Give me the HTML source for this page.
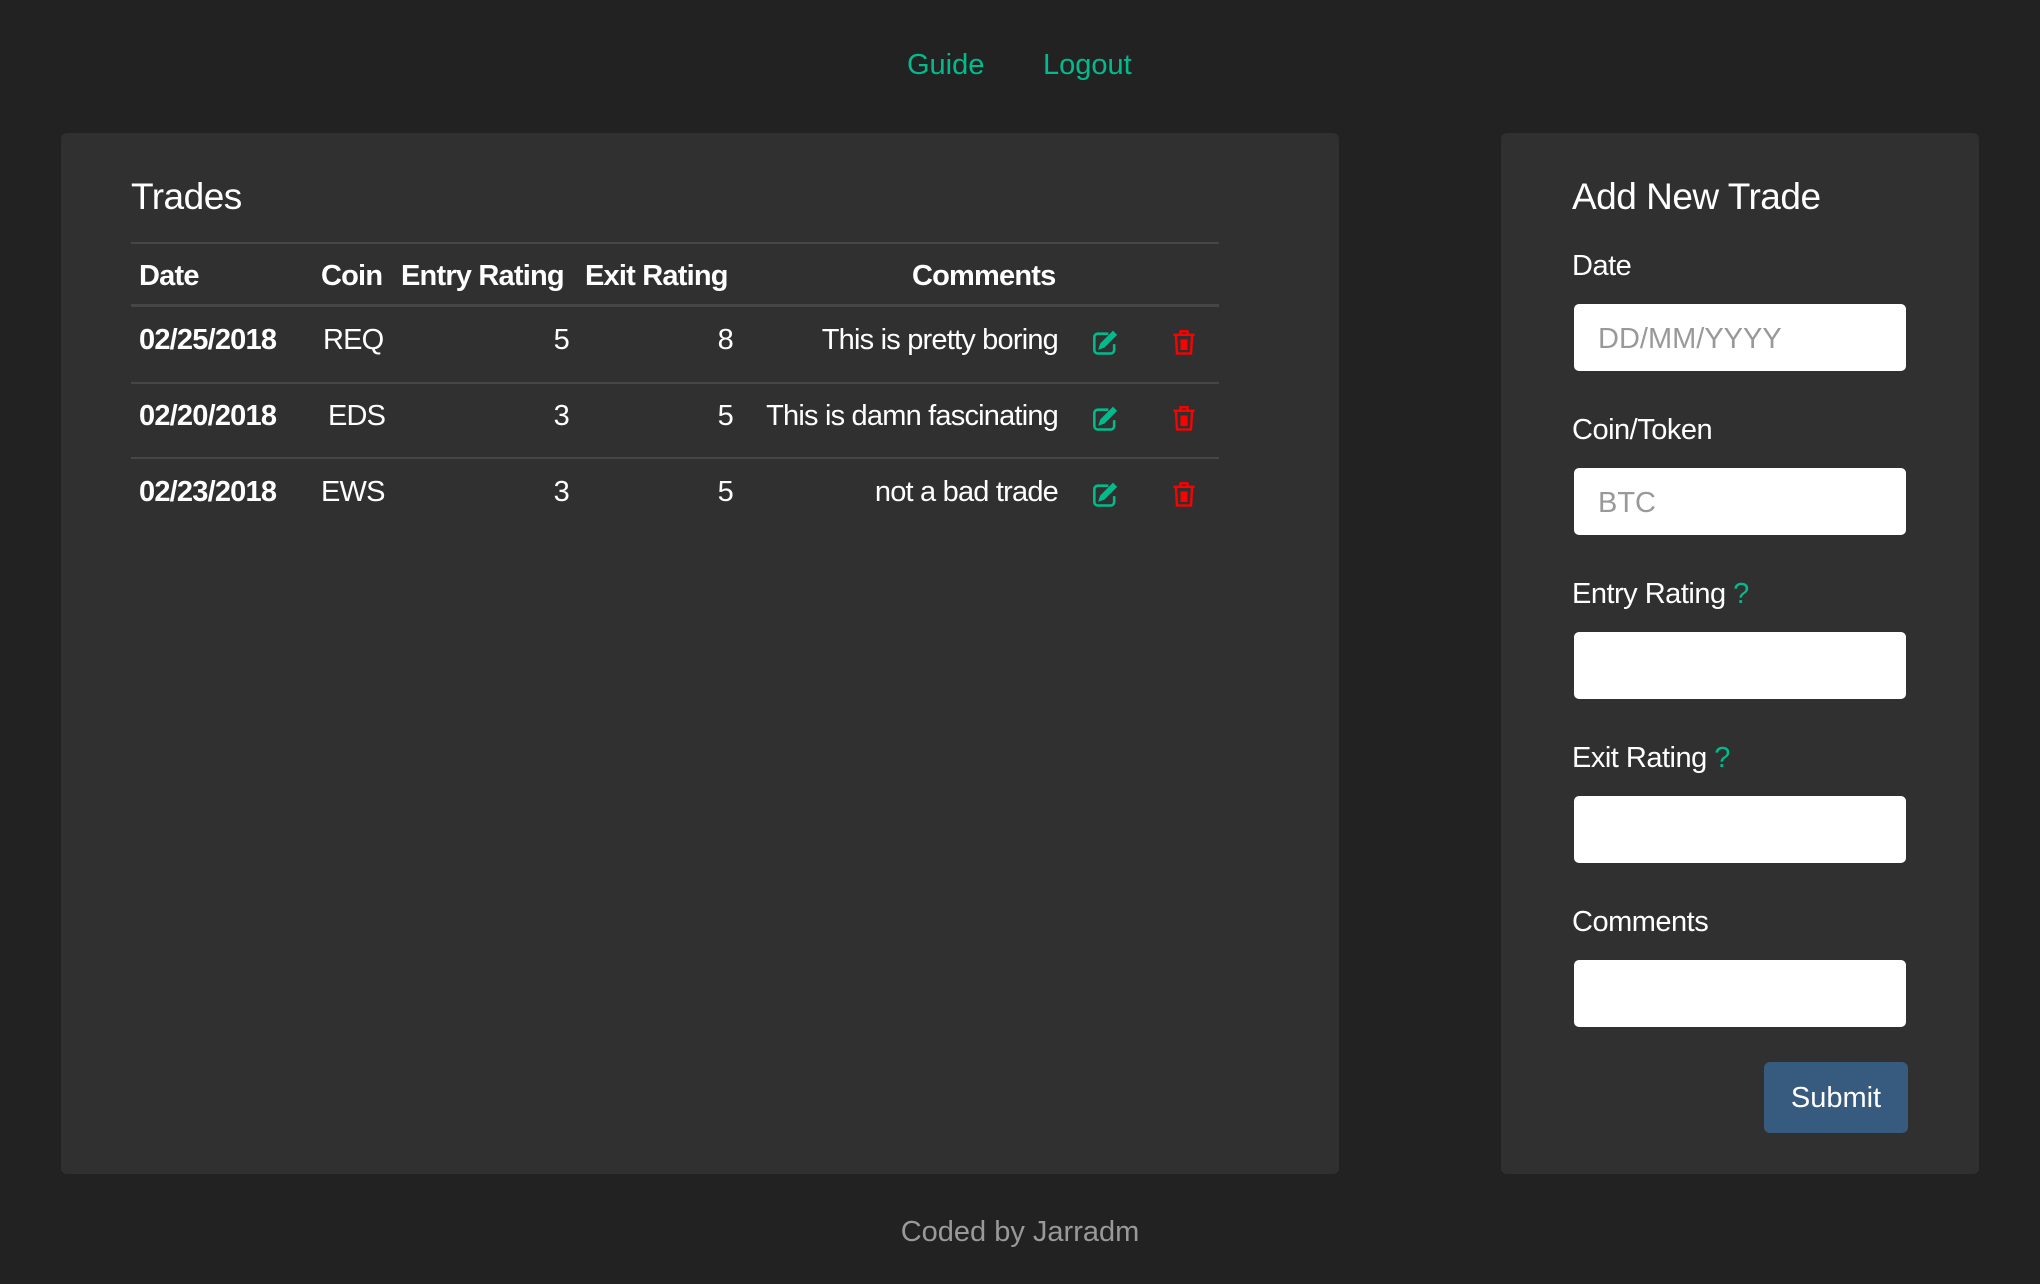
<!DOCTYPE html>
<html><head><meta charset="utf-8"><style>
*{margin:0;padding:0;box-sizing:border-box}
body{width:2040px;height:1284px;background:#222;font-family:"Liberation Sans",sans-serif;color:#fff;position:relative;overflow:hidden}
.a{position:absolute;white-space:nowrap;line-height:1}
.nav{color:#00bc8c;font-size:29px;top:51px}
.panel{position:absolute;background:#303030;border-radius:6px}
h{position:absolute;font-size:37px;line-height:1;letter-spacing:-0.5px}
.t{font-size:29px;letter-spacing:-0.8px}
.b{font-weight:bold}
.line{position:absolute;left:131px;width:1088px;background:#464646}
.lab{font-size:29px;letter-spacing:-0.5px}
.inp{position:absolute;left:1574px;width:332px;height:67px;background:#fff;border-radius:5px;color:#999;font-size:29px;padding:21px 0 0 24px;line-height:1}
.q{color:#00bc8c}
</style></head><body>
<div class="a nav" style="left:907px">Guide</div>
<div class="a nav" style="left:1043px">Logout</div>

<div class="panel" style="left:61px;top:133px;width:1278px;height:1041px"></div>
<div class="panel" style="left:1501px;top:133px;width:478px;height:1041px"></div>

<h style="left:131px;top:178px">Trades</h>
<div class="line" style="top:242px;height:2px"></div>
<div class="line" style="top:304px;height:3px"></div>
<div class="line" style="top:382px;height:2px"></div>
<div class="line" style="top:457px;height:2px"></div>

<div class="a t b" style="left:139px;top:262px">Date</div>
<div class="a t b" style="left:321px;top:262px">Coin</div>
<div class="a t b" style="left:401px;top:262px">Entry Rating</div>
<div class="a t b" style="left:585px;top:262px">Exit Rating</div>
<div class="a t b" style="left:912px;top:262px">Comments</div>

<div class="a t b" style="left:139px;top:326px">02/25/2018</div>
<div class="a t" style="left:323px;top:326px">REQ</div>
<div class="a t" style="left:500px;width:69px;text-align:right;top:326px">5</div>
<div class="a t" style="left:660px;width:73px;text-align:right;top:326px">8</div>
<div class="a t" style="left:700px;width:358px;text-align:right;top:326px">This is pretty boring</div>

<div class="a t b" style="left:139px;top:402px">02/20/2018</div>
<div class="a t" style="left:328px;top:402px">EDS</div>
<div class="a t" style="left:500px;width:69px;text-align:right;top:402px">3</div>
<div class="a t" style="left:660px;width:73px;text-align:right;top:402px">5</div>
<div class="a t" style="left:700px;width:358px;text-align:right;top:402px">This is damn fascinating</div>

<div class="a t b" style="left:139px;top:478px">02/23/2018</div>
<div class="a t" style="left:321px;top:478px">EWS</div>
<div class="a t" style="left:500px;width:69px;text-align:right;top:478px">3</div>
<div class="a t" style="left:660px;width:73px;text-align:right;top:478px">5</div>
<div class="a t" style="left:700px;width:358px;text-align:right;top:478px">not a bad trade</div>

<svg width="0" height="0" style="position:absolute"><defs>
<g id="ed" fill="none" stroke="#00bc8c" stroke-width="2.2"><path d="M14 4H5a3 3 0 0 0-3 3v11a3 3 0 0 0 3 3h11a3 3 0 0 0 3-3v-5"/><path d="M10 15l-3 1 1-3 10-10 2 2z" fill="#00bc8c"/></g>
<g id="tr" fill="none" stroke="#f00" stroke-width="2"><path d="M2 5h18M8 5V2h6v3M4 5l1 16h12l1-16M9 9v9M11 9v9M13 9v9"/></g>
</defs></svg>
<svg class="a" style="left:1092px;top:329px" width="28" height="28" viewBox="0 0 24 24"><use href="#ed"/></svg>
<svg class="a" style="left:1171px;top:329px" width="26" height="28" viewBox="0 0 22 24"><use href="#tr"/></svg>
<svg class="a" style="left:1092px;top:405px" width="28" height="28" viewBox="0 0 24 24"><use href="#ed"/></svg>
<svg class="a" style="left:1171px;top:405px" width="26" height="28" viewBox="0 0 22 24"><use href="#tr"/></svg>
<svg class="a" style="left:1092px;top:481px" width="28" height="28" viewBox="0 0 24 24"><use href="#ed"/></svg>
<svg class="a" style="left:1171px;top:481px" width="26" height="28" viewBox="0 0 22 24"><use href="#tr"/></svg>

<h style="left:1572px;top:178px">Add New Trade</h>
<div class="a lab" style="left:1572px;top:252px">Date</div>
<div class="inp" style="top:304px">DD/MM/YYYY</div>
<div class="a lab" style="left:1572px;top:416px">Coin/Token</div>
<div class="inp" style="top:468px">BTC</div>
<div class="a lab" style="left:1572px;top:580px">Entry Rating <span class="q">?</span></div>
<div class="inp" style="top:632px"></div>
<div class="a lab" style="left:1572px;top:744px">Exit Rating <span class="q">?</span></div>
<div class="inp" style="top:796px"></div>
<div class="a lab" style="left:1572px;top:908px">Comments</div>
<div class="inp" style="top:960px"></div>
<div class="a" style="left:1764px;top:1062px;width:144px;height:71px;background:#375a7f;border-radius:6px;font-size:29px;text-align:center;line-height:73px">Submit</div>

<div class="a" style="left:0;width:2040px;text-align:center;top:1218px;font-size:29px;color:#999">Coded by Jarradm</div>
</body></html>
